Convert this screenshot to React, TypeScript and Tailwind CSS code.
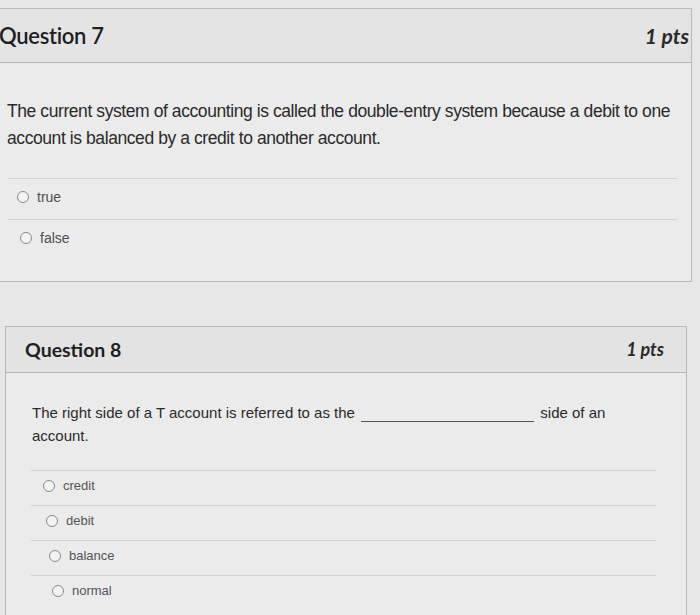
const q8Options = ['credit', 'debit', 'balance', 'normal']

function Radio({ label, className }: { label: string; className: string }) {
  return (
    <div className={`flex items-center gap-[8px] border-t border-[#d2d2d2] ${className}`}>
      <span className="w-[12px] h-[12px] rounded-full border border-[#8a8a8a] bg-[#f3f3f3]" />
      <span>{label}</span>
    </div>
  )
}

export default function App() {
  return (
    <div className="min-h-[615px] bg-[#e7e7e7] pt-[8px] overflow-hidden font-['Liberation_Sans',Arial,sans-serif] text-[#2b2b2b]">
      {/* Question 7 */}
      <div className="ml-[-20px] w-[712px] border-t border-b border-r border-[#b9b9b9] bg-[#ebebeb]">
        <div className="h-[54px] flex items-center justify-between pl-[19px] pr-[6px] bg-[#e4e4e4] border-b border-[#b4b4b4]">
          <h2 className="font-['Lato',sans-serif] text-[22px] font-semibold tracking-[-0.3px] text-[#1f1f1f]">Question 7</h2>
          <span className="mr-[-4px] font-['Lato',sans-serif] text-[21px] font-bold italic text-[#2a2a2a]">1 pts</span>
        </div>
        <div className="pt-[35px] pb-[21px]">
          <p className="pl-[27px] pr-[10px] text-[17.5px] leading-[27px] tracking-[-0.42px] text-[#2a2a2a]">
            The current system of accounting is called the double-entry system because a debit to one account is balanced by a credit to another account.
          </p>
          <div className="mt-[26px] ml-[28px] mr-[14px] text-[14px] text-[#4f4f4f]">
            <Radio label="true" className="h-[41px] pb-[4px] pl-[9px]" />
            <Radio label="false" className="h-[41px] pb-[4px] pl-[12px]" />
          </div>
        </div>
      </div>

      {/* Question 8 */}
      <div className="mt-[44px] ml-[5px] w-[682px] border border-[#b9b9b9] bg-[#ebebeb]">
        <div className="h-[46px] flex items-center justify-between pl-[19px] pr-[22px] bg-[#e3e3e3] border-b border-[#b4b4b4]">
          <h2 className="font-['Lato',sans-serif] text-[19.5px] font-bold text-[#1f1f1f]">Question 8</h2>
          <span className="font-['Lato',sans-serif] text-[18px] font-bold italic text-[#2a2a2a]">1 pts</span>
        </div>
        <div className="pt-[28px] pb-[10px]">
          <p className="pl-[26px] pr-[70px] text-[15px] leading-[23px] text-[#2a2a2a]">
            The right side of a T account is referred to as the{' '}
            <span className="inline-block w-[173px] h-[14px] border-b border-[#555] align-[-4px] mx-[2px]" />{' '}
            side of an account.
          </p>
          <div className="mt-[23px] ml-[25px] mr-[30px] text-[13px] text-[#555]">
            {q8Options.map((o, i) => (
              <Radio
                key={o}
                label={o}
                className={`h-[35px] pb-[5px] ${['pl-[12px]', 'pl-[15px]', 'pl-[18px]', 'pl-[21px]'][i]}`}
              />
            ))}
          </div>
        </div>
      </div>
    </div>
  )
}
